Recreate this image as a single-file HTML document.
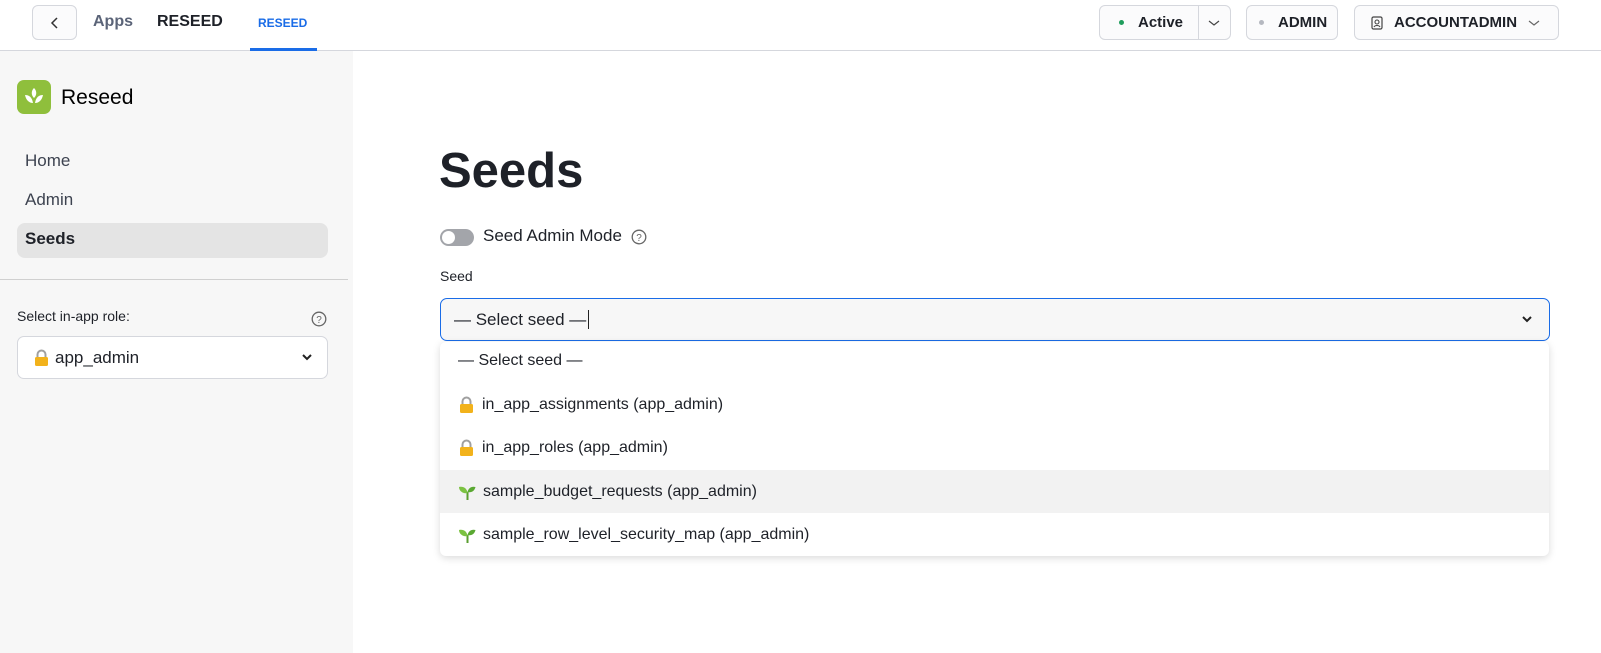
<!DOCTYPE html>
<html><head><style>
*{box-sizing:border-box;margin:0;padding:0}
body{width:1601px;height:653px;overflow:hidden;font-family:"Liberation Sans",sans-serif;background:#fff;position:relative;color:#1e2128}
.abs{position:absolute}
.top{left:0;top:0;width:1601px;height:51px;border-bottom:1px solid #d5d7dd;background:#fff}
.btn{position:absolute;border:1px solid #d5d7dd;border-radius:6px;background:#fbfbfc;height:35px;top:5px;display:flex;align-items:center;font-weight:bold;font-size:15px;color:#1e2128}
.side{left:0;top:51px;width:353px;height:602px;background:#f7f7f7}
.nav{position:absolute;left:25px;font-size:17px;color:#3d4350}
.opt{position:absolute;left:440px;width:1109px;height:43px;display:flex;align-items:center;padding-left:18px;font-size:16px;color:#1e2128}
svg{display:inline-block}
</style></head><body>
<div class="abs top">
  <div class="btn" style="left:32px;width:45px;justify-content:center"><svg width="10" height="14" viewBox="0 0 10 14"><path d="M7 2L2 7l5 5" fill="none" stroke="#333" stroke-width="1.5"/></svg></div>
  <div class="abs" style="left:93px;top:13px;font-weight:bold;font-size:16px;color:#5b6478">Apps</div>
  <div class="abs" style="left:157px;top:13px;font-weight:bold;font-size:16px;color:#1e2128">RESEED</div>
  <div class="abs" style="left:258px;top:16px;font-weight:bold;font-size:12px;color:#1a6ce7">RESEED</div>
  <div class="abs" style="left:250px;top:48px;width:67px;height:3px;background:#1a6ce7"></div>
  <div class="btn" style="left:1099px;width:132px"><span style="width:5px;height:5px;border-radius:50%;background:#1f9d5c;margin-left:19px;margin-right:14px"></span>Active<span style="position:absolute;left:98px;top:0;height:33px;border-left:1px solid #d5d7dd"></span><svg style="position:absolute;left:107px;top:12px" width="14" height="10" viewBox="0 0 14 10"><path d="M2 3l5 4 5-4" fill="none" stroke="#444" stroke-width="1.2"/></svg></div>
  <div class="btn" style="left:1246px;width:92px"><span style="width:5px;height:5px;border-radius:50%;background:#b5b8c0;margin-left:12px;margin-right:14px"></span>ADMIN</div>
  <div class="btn" style="left:1354px;width:205px"><svg style="margin-left:16px;margin-right:11px" width="12" height="14" viewBox="0 0 12 14"><rect x="1" y="1" width="10" height="12" rx="1.5" fill="none" stroke="#444" stroke-width="1.2"/><circle cx="6" cy="6" r="2" fill="none" stroke="#444" stroke-width="1.1"/><path d="M3 11c1-2 5-2 6 0" fill="none" stroke="#444" stroke-width="1.1"/></svg>ACCOUNTADMIN<svg style="margin-left:10px" width="14" height="10" viewBox="0 0 14 10"><path d="M2 3l5 4 5-4" fill="none" stroke="#666" stroke-width="1.2"/></svg></div>
</div>
<div class="abs side">
  <div class="abs" style="left:17px;top:29px;width:34px;height:34px;border-radius:7px;background:#8fbf3c">
    <svg width="34" height="34" viewBox="0 0 34 34"><path d="M17 8c3 3 3 7 0 10c-3-3-3-7 0-10z" fill="#fff"/><path d="M8 15c4 0 7 2 8 8c-4 0-7-3-8-8z" fill="#fff"/><path d="M26 15c-4 0-7 2-8 8c4 0 7-3 8-8z" fill="#fff"/></svg>
  </div>
  <div class="abs" style="left:61px;top:35px;font-size:21px;color:#000">Reseed</div>
  <div class="nav" style="top:100px">Home</div>
  <div class="nav" style="top:139px">Admin</div>
  <div class="abs" style="left:17px;top:172px;width:311px;height:35px;border-radius:8px;background:#e4e4e4"></div>
  <div class="nav" style="top:178px;font-weight:bold;color:#1e2128">Seeds</div>
  <div class="abs" style="left:0;top:228px;width:348px;height:1px;background:#d0d0d0"></div>
  <div class="abs" style="left:17px;top:257px;font-size:14px;color:#1e2128">Select in-app role:</div>
  <svg class="abs" style="left:311px;top:260px" width="16" height="16" viewBox="0 0 16 16"><circle cx="8" cy="8" r="6.8" fill="none" stroke="#666" stroke-width="1.3"/><text x="8" y="12" font-size="10" text-anchor="middle" fill="#666" font-family="Liberation Sans">?</text></svg>
  <div class="abs" style="left:17px;top:285px;width:311px;height:43px;border:1px solid #d5d7dd;border-radius:7px;background:#fff;display:flex;align-items:center;padding-left:15px;font-size:17px">
    <svg width="17" height="18" viewBox="0 0 17 18" style="margin-right:5px"><path d="M4.5 8V5.5a4 4 0 0 1 8 0V8" fill="none" stroke="#a0a0a0" stroke-width="2"/><rect x="2" y="8" width="13" height="9" rx="1.5" fill="#f2b21b"/></svg>app_admin
    <svg style="position:absolute;right:14px;top:16px" width="12" height="9" viewBox="0 0 12 9"><path d="M2 2l4 4 4-4" fill="none" stroke="#222" stroke-width="2"/></svg>
  </div>
</div>
<div class="abs" style="left:439px;top:143px;font-size:49px;font-weight:bold;color:#1e2128">Seeds</div>
<div class="abs" style="left:440px;top:229px;width:34px;height:17px;border-radius:9px;background:#a3a5aa"><div style="position:absolute;left:2px;top:2px;width:13px;height:13px;border-radius:50%;background:#fff"></div></div>
<div class="abs" style="left:483px;top:226px;font-size:17px;color:#1e2128">Seed Admin Mode</div>
<svg class="abs" style="left:631px;top:229px" width="16" height="16" viewBox="0 0 16 16"><circle cx="8" cy="8" r="6.8" fill="none" stroke="#666" stroke-width="1.3"/><text x="8" y="12" font-size="10" text-anchor="middle" fill="#666" font-family="Liberation Sans">?</text></svg>
<div class="abs" style="left:440px;top:268px;font-size:14px;color:#1e2128">Seed</div>
<div class="abs" style="left:440px;top:298px;width:1110px;height:43px;border:1px solid #1a6ce7;border-radius:7px;background:#f7f7f7;display:flex;align-items:center;padding-left:13px;font-size:17px">— Select seed —<span style="display:inline-block;width:1px;height:19px;background:#222;margin-left:2px"></span>
  <svg style="position:absolute;right:16px;top:16px" width="12" height="9" viewBox="0 0 12 9"><path d="M2 2l4 4 4-4" fill="none" stroke="#222" stroke-width="2"/></svg></div>
<div class="abs" style="left:440px;top:342px;width:1109px;height:214px;background:#fff;border-radius:6px;box-shadow:0 2px 8px rgba(0,0,0,.15)"></div>
<div class="opt" style="top:339px">— Select seed —</div>
<div class="opt" style="top:383px"><svg width="17" height="18" viewBox="0 0 17 18" style="margin-right:7px"><path d="M4.5 8V5.5a4 4 0 0 1 8 0V8" fill="none" stroke="#a0a0a0" stroke-width="2"/><rect x="2" y="8" width="13" height="9" rx="1.5" fill="#f2b21b"/></svg>in_app_assignments (app_admin)</div>
<div class="opt" style="top:426px"><svg width="17" height="18" viewBox="0 0 17 18" style="margin-right:7px"><path d="M4.5 8V5.5a4 4 0 0 1 8 0V8" fill="none" stroke="#a0a0a0" stroke-width="2"/><rect x="2" y="8" width="13" height="9" rx="1.5" fill="#f2b21b"/></svg>in_app_roles (app_admin)</div>
<div class="opt" style="top:470px;background:#f2f2f2"><svg width="19" height="18" viewBox="0 0 19 18" style="margin-right:6px"><path d="M9.5 17V9" stroke="#5a9e2f" stroke-width="2"/><path d="M9.5 10C9 5 5 3 1 4c0 4 4 7 8.5 6z" fill="#7cc242"/><path d="M9.5 9c1-4 4-6 8-5-1 4-4 6-8 5z" fill="#5aa832"/></svg>sample_budget_requests (app_admin)</div>
<div class="opt" style="top:513px"><svg width="19" height="18" viewBox="0 0 19 18" style="margin-right:6px"><path d="M9.5 17V9" stroke="#5a9e2f" stroke-width="2"/><path d="M9.5 10C9 5 5 3 1 4c0 4 4 7 8.5 6z" fill="#7cc242"/><path d="M9.5 9c1-4 4-6 8-5-1 4-4 6-8 5z" fill="#5aa832"/></svg>sample_row_level_security_map (app_admin)</div>
</body></html>
